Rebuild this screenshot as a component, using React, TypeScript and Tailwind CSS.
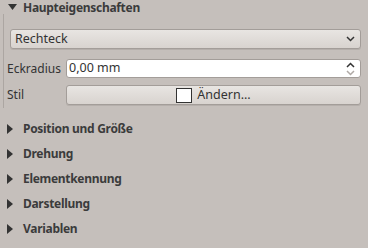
import React from "react";

const font = { fontFamily: '"Noto Sans", "DejaVu Sans", sans-serif' };

function Section({ label }: { label: string }) {
  return (
    <div className="h-[25px] flex items-center">
      <svg width="6" height="10" viewBox="0 0 6 10" className="ml-[7px]">
        <polygon points="0,0 6,5 0,10" fill="#333" />
      </svg>
      <span className="ml-[10px] text-[12px] font-bold tracking-[-0.3px] text-[#3b3b3b] leading-[16px]">{label}</span>
    </div>
  );
}

export default function App() {
  return (
    <div className="w-[368px] h-[248px] bg-[#c5bfbb] text-[#333] overflow-hidden" style={font}>
      <div className="h-[14px] flex items-center">
        <svg width="9" height="6" viewBox="0 0 9 6" className="ml-[8px]">
          <polygon points="0,0 9,0 4.5,6" fill="#333" />
        </svg>
        <span className="ml-[6px] mt-[1px] text-[12px] font-bold tracking-[-0.3px] text-[#3b3b3b] leading-[14px]">Haupteigenschaften</span>
      </div>
      <div className="ml-[3px] h-[94px] border-l border-[#aca6a2] pt-[15px] pr-[7px] flex flex-col">
        <div className="ml-[6px] h-[20px] rounded-[3px] border border-[#a39d99] bg-gradient-to-b from-[#e8e5e2] to-[#d8d3cf] shadow-[0_1px_0_#b5afab] flex items-center justify-between pl-[4px] pr-[5px]">
          <span className="text-[12.5px] leading-none text-[#333]">Rechteck</span>
          <svg width="9" height="6" viewBox="0 0 9 6">
            <polyline points="1,1 4.5,4.5 8,1" fill="none" stroke="#333" strokeWidth="1.5" />
          </svg>
        </div>
        <div className="mt-[10px] flex items-center">
          <span className="w-[62px] pl-[3px] text-[12px] leading-none text-[#333]">Eckradius</span>
          <div className="flex-1 h-[19px] rounded-[3px] border border-[#a39d99] bg-white flex items-center justify-between pl-[2px] pr-[5px]">
            <span className="text-[12.5px] leading-none text-[#333]">0,00 mm</span>
            <svg width="9" height="14" viewBox="0 0 9 14">
              <polyline points="1,5 4.5,1.5 8,5" fill="none" stroke="#333" strokeWidth="1.5" />
              <polyline points="1,9 4.5,12.5 8,9" fill="none" stroke="#b0aaa6" strokeWidth="1.5" />
            </svg>
          </div>
        </div>
        <div className="mt-[7px] flex items-center">
          <span className="w-[62px] pl-[3px] text-[12px] leading-none text-[#333]">Stil</span>
          <div className="flex-1 h-[20px] rounded-[3px] border border-[#a39d99] bg-gradient-to-b from-[#e8e5e2] to-[#d8d3cf] shadow-[0_1px_0_#b5afab] flex items-center justify-center">
            <div className="w-[16px] h-[15px] bg-white border border-[#333]" />
            <span className="ml-[5px] text-[12.5px] leading-none text-[#333]">Ändern...</span>
          </div>
        </div>
      </div>
      <div className="mt-[8px]">
        <Section label="Position und Größe" />
        <Section label="Drehung" />
        <Section label="Elementkennung" />
        <Section label="Darstellung" />
        <Section label="Variablen" />
      </div>
    </div>
  );
}
